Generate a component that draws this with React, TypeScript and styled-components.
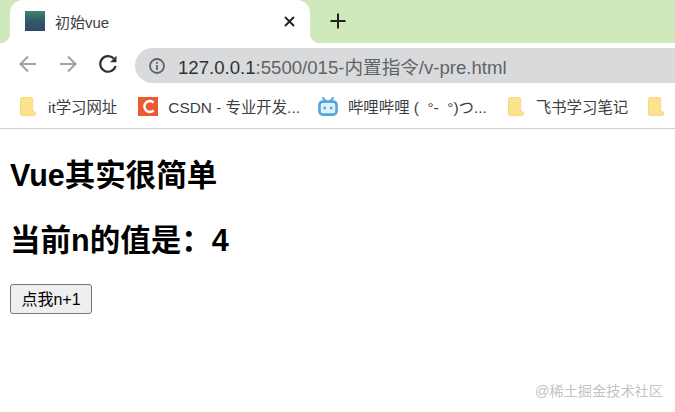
import React from 'react';
import styled, { createGlobalStyle } from 'styled-components';

const CJK = '"Liberation Sans", "Noto Sans CJK SC", sans-serif';

const GlobalStyle = createGlobalStyle`
  html, body {
    margin: 0;
    padding: 0;
    height: 100%;
    background: #fff;
    overflow: hidden;
  }
  #root {
    height: 100%;
  }
`;

const Page = styled.div`
  position: relative;
  width: 675px;
  height: 412px;
  overflow: hidden;
  font-family: ${CJK};
  color: #000;
`;

const TabStrip = styled.div`
  display: flex;
  align-items: flex-end;
  height: 43px;
  padding-left: 10px;
  background: #cfe9bd;
`;

const Tab = styled.div`
  position: relative;
  display: flex;
  align-items: center;
  box-sizing: border-box;
  width: 300px;
  height: 43px;
  padding: 0 15px 0 15px;
  background: #fff;
  border-radius: 13px 13px 0 0;

  &::before,
  &::after {
    content: '';
    position: absolute;
    bottom: 0;
    width: 10px;
    height: 10px;
    background: radial-gradient(circle at var(--cx) 0, #cfe9bd 10px, #fff 10.5px);
  }
  &::before {
    --cx: 0;
    left: -10px;
  }
  &::after {
    --cx: 100%;
    right: -10px;
  }
`;

const Favicon = styled.div`
  flex: none;
  width: 20px;
  height: 20px;
  margin-right: 10px;
  margin-top: -1px;
  background: linear-gradient(180deg, #41836f 0%, #2f5a66 50%, #33476b 100%);
`;

const TabTitle = styled.span`
  flex: 1;
  font-size: 15px;
  color: #3c4043;
`;

const NewTab = styled.div`
  display: flex;
  align-items: center;
  justify-content: center;
  width: 24px;
  height: 24px;
  margin: 0 0 10px 16px;
`;

const Toolbar = styled.div`
  display: flex;
  align-items: center;
  gap: 16px;
  height: 45px;
  padding-left: 16px;
  background: #fff;
`;

const NavButton = styled.div`
  display: flex;
  align-items: center;
  justify-content: center;
  flex: none;
  width: 24px;
  height: 24px;
  margin-top: -3px;
`;

const Omnibox = styled.div`
  display: flex;
  align-items: center;
  flex: none;
  width: 560px;
  height: 35px;
  margin-left: -1px;
  padding-left: 13px;
  background: #d9dadc;
  border-radius: 18px 0 0 18px;
`;

const Url = styled.span`
  margin-left: 12px;
  font-size: 18.6px;
  color: #5f6368;
  white-space: nowrap;
`;

const UrlHost = styled.span`
  color: #303134;
`;

const Bookmarks = styled.div`
  display: flex;
  align-items: center;
  box-sizing: border-box;
  height: 41px;
  padding: 0 0 4px 20px;
  background: #fff;
  border-bottom: 1px solid #d0d0d0;
  white-space: nowrap;
`;

const Bookmark = styled.div<{ $gap: number }>`
  display: flex;
  align-items: center;
  flex: none;
  margin-right: ${({ $gap }) => $gap}px;
`;

const BookmarkLabel = styled.span<{ $offset: number }>`
  margin-left: ${({ $offset }) => $offset}px;
  font-size: 15.4px;
  color: #3c4043;
`;

const Content = styled.main`
  padding: 27px 10px 0;
`;

const Heading = styled.h1`
  margin: 0 0 26px;
  font-size: 30.5px;
  line-height: 39px;
  font-weight: 700;
`;

const ClickButton = styled.button`
  display: block;
  box-sizing: border-box;
  width: 82px;
  height: 30px;
  margin-top: -2px;
  padding: 0 0 2px;
  font-family: ${CJK};
  font-size: 16px;
  color: #000;
  background: #efefef;
  border: 1px solid #767676;
  border-radius: 3px;
`;

const Watermark = styled.div`
  position: absolute;
  right: 12px;
  bottom: 13px;
  font-size: 14.2px;
  line-height: 16px;
  color: #c4c4c4;
`;

const FolderIcon = () => (
  <svg width="16" height="19" viewBox="0 0 16 19">
    <path
      d="M2 0.5h9c1 0 1.7.7 1.7 1.7V14.6h1.4c.8 0 1.4.6 1.4 1.4v1c0 .8-.6 1.5-1.4 1.5H2c-.8 0-1.5-.7-1.5-1.5V2C.5 1.2 1.2.5 2 .5z"
      fill="#fde28d"
      stroke="#f6d987"
    />
  </svg>
);

const CsdnIcon = () => (
  <svg width="20" height="19" viewBox="0 0 20 19">
    <rect width="20" height="19" fill="#ec5a33" />
    <path d="M15.6 5.6A5.4 5.4 0 1 0 15.6 13.4" fill="none" stroke="#fff" strokeWidth="2.6" />
  </svg>
);

const BiliIcon = () => (
  <svg width="20" height="19" viewBox="0 0 20 19">
    <path d="M5 1l3 3.5M15 1l-3 3.5" stroke="#4fa8dc" strokeWidth="2" strokeLinecap="round" />
    <rect x="1.5" y="4.6" width="17" height="13" rx="3.2" fill="#e2f2fb" stroke="#4fa8dc" strokeWidth="2.6" />
    <circle cx="6.8" cy="11" r="1.4" fill="#4fa8dc" />
    <circle cx="13.2" cy="11" r="1.4" fill="#4fa8dc" />
  </svg>
);

export default function App() {
  return (
    <Page>
      <GlobalStyle />
      <TabStrip>
        <Tab>
          <Favicon />
          <TabTitle>初始vue</TabTitle>
          <svg width="11" height="11" viewBox="0 0 11 11">
            <path d="M1 1l9 9M10 1l-9 9" stroke="#202124" strokeWidth="1.9" />
          </svg>
        </Tab>
        <NewTab>
          <svg width="16" height="16" viewBox="0 0 16 16">
            <path d="M8 0.5v15M0.5 8h15" stroke="#202124" strokeWidth="2" />
          </svg>
        </NewTab>
      </TabStrip>
      <Toolbar>
        <NavButton>
          <svg width="24" height="24" viewBox="0 0 24 24">
            <path d="M20 12H5.5M12 4.5L4.5 12l7.5 7.5" fill="none" stroke="#a0a2a5" strokeWidth="2.1" />
          </svg>
        </NavButton>
        <NavButton>
          <svg width="24" height="24" viewBox="0 0 24 24">
            <path d="M4 12h14.5M12 4.5l7.5 7.5-7.5 7.5" fill="none" stroke="#a0a2a5" strokeWidth="2.1" />
          </svg>
        </NavButton>
        <NavButton>
          <svg width="24" height="24" viewBox="0 0 24 24">
            <path d="M17.8 6.6A7.8 7.8 0 1 0 19.6 14" fill="none" stroke="#303134" strokeWidth="2.2" />
            <path d="M20.5 3.8V10.2H14.1z" fill="#303134" />
          </svg>
        </NavButton>
        <Omnibox>
          <svg width="18" height="18" viewBox="0 0 18 18">
            <circle cx="9" cy="9" r="7" fill="none" stroke="#5f6368" strokeWidth="1.8" />
            <path d="M9 8v5M9 5v1.8" stroke="#5f6368" strokeWidth="1.8" />
          </svg>
          <Url>
            <UrlHost>127.0.0.1</UrlHost>:5500/015-内置指令/v-pre.html
          </Url>
        </Omnibox>
      </Toolbar>
      <Bookmarks>
        <Bookmark $gap={21}>
          <FolderIcon />
          <BookmarkLabel $offset={12}>it学习网址</BookmarkLabel>
        </Bookmark>
        <Bookmark $gap={18}>
          <CsdnIcon />
          <BookmarkLabel $offset={10}>CSDN - 专业开发...</BookmarkLabel>
        </Bookmark>
        <Bookmark $gap={21}>
          <BiliIcon />
          <BookmarkLabel $offset={10}>{'哔哩哔哩 (\u00a0\u00a0°-\u00a0\u00a0°)つ...'}</BookmarkLabel>
        </Bookmark>
        <Bookmark $gap={20}>
          <FolderIcon />
          <BookmarkLabel $offset={12}>飞书学习笔记</BookmarkLabel>
        </Bookmark>
        <Bookmark $gap={0}>
          <FolderIcon />
        </Bookmark>
      </Bookmarks>
      <Content>
        <Heading>Vue其实很简单</Heading>
        <Heading>当前n的值是：4</Heading>
        <ClickButton>点我n+1</ClickButton>
      </Content>
      <Watermark>@稀土掘金技术社区</Watermark>
    </Page>
  );
}
